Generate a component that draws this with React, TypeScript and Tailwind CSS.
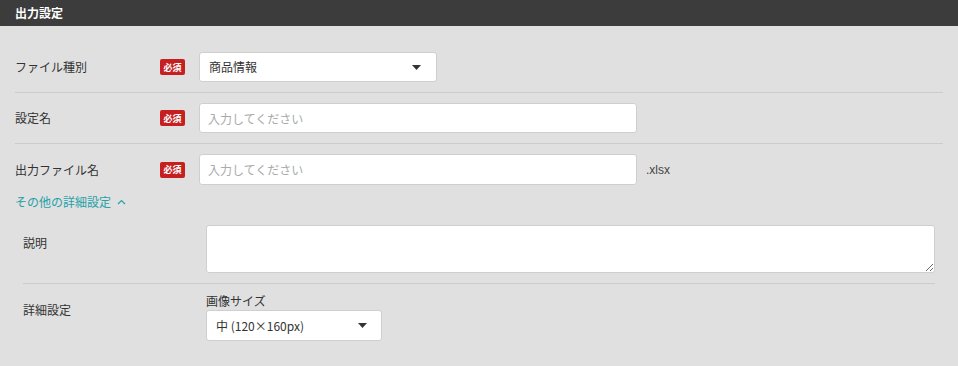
import React from "react";

const font = { fontFamily: '"Noto Sans CJK JP", "Noto Sans", sans-serif' };

function Badge() {
  return (
    <span className="flex h-[16px] w-[25px] items-center justify-center rounded-[2px] bg-[#c5201f] text-[9px] font-bold leading-none text-white">
      必須
    </span>
  );
}

function Caret() {
  return (
    <svg width="9" height="5" viewBox="0 0 9 5" className="shrink-0">
      <path d="M0 0 L9 0 L4.5 5 Z" fill="#333" />
    </svg>
  );
}

function Row({ label, children }: { label: string; children: React.ReactNode }) {
  return (
    <div className="flex items-center border-b border-[#cccccc] py-[10px]">
      <div className="w-[145px] text-[12px] text-[#333]">{label}</div>
      <Badge />
      <div className="ml-[14px] flex items-center">{children}</div>
    </div>
  );
}

export default function App() {
  return (
    <div className="h-[366px] w-[958px] bg-[#e0e0e0] text-[#333]" style={font}>
      <div className="flex h-[26px] items-center bg-[#3c3c3c] px-[15px] text-[12px] font-bold text-white">
        出力設定
      </div>
      <div className="px-[15px] pt-[16px]">
        <Row label="ファイル種別">
          <div className="flex h-[30px] w-[238px] items-center justify-between rounded-[3px] border border-[#cfcfcf] bg-white pl-[9px] pr-[15px] text-[12px]">
            <span>商品情報</span>
            <Caret />
          </div>
        </Row>
        <Row label="設定名">
          <input
            placeholder="入力してください"
            className="h-[30px] w-[438px] rounded-[3px] border border-[#cfcfcf] bg-white px-[8px] text-[12px] placeholder:text-[#aaa] outline-none"
          />
        </Row>
        <div className="flex items-center pt-[10px]">
          <div className="w-[145px] text-[12px] text-[#333]">出力ファイル名</div>
          <Badge />
          <input
            placeholder="入力してください"
            className="ml-[14px] h-[31px] w-[438px] rounded-[3px] border border-[#cfcfcf] bg-white px-[8px] text-[12px] placeholder:text-[#aaa] outline-none"
          />
          <span className="ml-[9px] text-[12px] text-[#444]" style={{ fontFamily: '"Liberation Sans", Arial, sans-serif' }}>
            .xlsx
          </span>
        </div>
        <div className="mt-[8px] flex items-center gap-[6px] text-[12px] text-[#27a1a8]">
          <span>その他の詳細設定</span>
          <svg width="9" height="6" viewBox="0 0 9 6">
            <path d="M1 5 L4.5 1.5 L8 5" fill="none" stroke="#27a1a8" strokeWidth="1.2" />
          </svg>
        </div>
        <div className="mt-[14px] pl-[8px] pr-[8px]">
          <div className="flex items-start border-b border-[#cccccc] pb-[10px]">
            <div className="w-[183px] pt-[9px] text-[12px]">説明</div>
            <textarea className="h-[48px] flex-1 rounded-[3px] border border-[#cfcfcf] bg-white outline-none" />
          </div>
          <div className="flex items-start pt-[9px]">
            <div className="w-[183px] pt-[8px] text-[12px]">詳細設定</div>
            <div className="flex flex-col">
              <span className="text-[12px] leading-[16px]">画像サイズ</span>
              <div className="mt-[1px] flex h-[31px] w-[176px] items-center justify-between rounded-[3px] border border-[#cfcfcf] bg-white pl-[9px] pr-[14px] text-[12px]">
                <span>中 (120×160px)</span>
                <Caret />
              </div>
            </div>
          </div>
        </div>
      </div>
    </div>
  );
}
